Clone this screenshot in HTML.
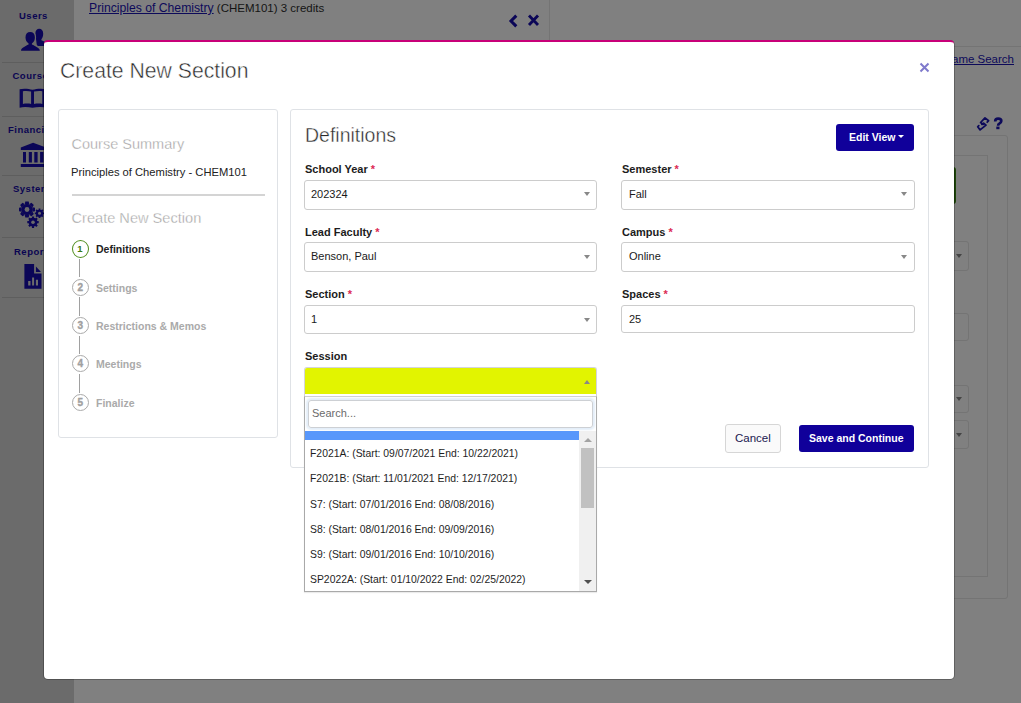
<!DOCTYPE html>
<html><head><meta charset="utf-8">
<style>
*{box-sizing:border-box;margin:0;padding:0}
html,body{width:1021px;height:703px;overflow:hidden;background:#808080;font-family:"Liberation Sans",sans-serif;position:relative}
div,span,svg{position:absolute}
span.n{position:static}
.t{white-space:pre;line-height:1}
#side{left:0;top:0;width:74px;height:703px;background:#6b6b6b}
.sl{font-size:9.5px;font-weight:bold;color:#0a0552;letter-spacing:0.5px;line-height:1;white-space:pre}
.hr{left:2px;width:72px;height:1px;background:#5e5e5e}
.card{border:1px solid #dfe2e6;border-radius:3px;background:#fff}
.lbl{font-size:11px;font-weight:bold;color:#1c1c1c;line-height:1;white-space:pre}
.ast{color:#dc2a55}
.sel{height:30px;border:1px solid #cccccc;border-radius:3px;background:#fff}
.val{font-size:11px;color:#1a1a1a;line-height:1;white-space:pre}
.arr{width:0;height:0;border-left:3px solid transparent;border-right:3px solid transparent;border-top:4px solid #888}
.circ{left:72px;width:17px;height:17px;border:1.3px solid #aaa;border-radius:50%}
.cn{left:-0.3px;width:15px;top:3.2px;text-align:center;font-size:10px;font-weight:bold;color:#a0a0a0;line-height:1;-webkit-text-stroke-width:0.35px}
.stp{left:96px;font-size:10.5px;font-weight:bold;color:#aaa;line-height:1;white-space:pre}
.vl{left:79px;width:1px;background:#a0a0a0}
.opt{left:310px;font-size:10.4px;color:#1e1e1e;line-height:1;white-space:pre}
</style></head><body>
<div id="side">
  <div class="sl" style="left:19px;top:11px">Users</div>
  <svg style="left:18px;top:25px" width="30" height="30" viewBox="0 0 30 30">
    <path fill="#0b0657" d="M17.3 8.8C17.3 5.6 19.2 3.8 21.2 3.8C23.4 3.8 25.2 5.6 25.2 8.8C25.2 11.3 24.4 13 23.4 14.2L23.4 15.3C25 16 26.5 16.8 28 17.5L28 21L20 21C19 20.2 18.6 19.4 18.6 18.4z"/>
    <path fill="#0b0657" stroke="#6b6b6b" stroke-width="2.4" paint-order="stroke" d="M3.1 25.8C2.9 24.6 3.4 23.6 4.8 22.7L9.3 19.9L10.6 19.4L10.6 18.5C8.6 17.2 7.5 15.2 7.5 12.3C7.5 8.8 9.4 7 12.2 7C15 7 16.9 8.8 16.9 12.3C16.9 15.2 15.9 17.2 13.9 18.5L13.9 19.4L15.2 19.9L19.8 22.7C21.3 23.6 21.9 24.6 21.8 25.8z"/>
  </svg>
  <div class="hr" style="top:62px"></div>
  <div class="sl" style="left:12.5px;top:71px">Courses</div>
  <svg style="left:15px;top:85px" width="32" height="27" viewBox="0 0 32 27">
    <path fill="#0b0657" fill-rule="evenodd" d="M4.6 4.2C8 3.3 13.5 3.5 17.5 4.8C21.5 3.5 27 3.3 32 4.2L32 22.7C27 21.8 21.5 22 17.5 22.8C13.5 22 8 21.8 4.6 22.7Z M7.9 6.3C10.5 5.9 14 6 16.1 6.6L16.1 19C14 18.5 10.5 18.4 7.9 19Z M19 6.6C21.5 6 25 5.9 27.3 6.3L27.3 19C25 18.4 21.5 18.5 19 19Z"/>
  </svg>
  <div class="hr" style="top:116px"></div>
  <div class="sl" style="left:8px;top:125px">Financial</div>
  <svg style="left:15px;top:138px" width="32" height="32" viewBox="0 0 32 32">
    <path fill="#0b0657" d="M18.1 4.8L31 9.5V12.1H5.8V9.5z M8 14h3v10.4H8z M13.8 14h3.1v10.4h-3.1z M19.3 14h3.3v10.4h-3.3z M25.1 14h3.4v10.4h-3.4z M5.8 26.1H32V29H5.8z"/>
  </svg>
  <div class="hr" style="top:175px"></div>
  <div class="sl" style="left:13px;top:184px">System</div>
  <svg style="left:18px;top:200px" width="30" height="30" viewBox="0 0 30 30">
    <g fill="#0b0657">
      <circle cx="9" cy="9.5" r="5.8"/>
      <path d="M7.3 1.5h3.4l0.5 2.5h-4.4z M7.3 17.5h3.4l0.5-2.5h-4.4z M1 7.8v3.4l2.5 0.5v-4.4z M17 7.8v3.4l-2.5 0.5v-4.4z"/>
      <path transform="rotate(45 9 9.5)" d="M7.3 1.5h3.4l0.5 2.5h-4.4z M7.3 17.5h3.4l0.5-2.5h-4.4z M1 7.8v3.4l2.5 0.5v-4.4z M17 7.8v3.4l-2.5 0.5v-4.4z"/>
      <circle cx="21.5" cy="13.3" r="3.6"/>
      <path d="M20.6 8.6h1.8v2h-1.8z M20.6 16h1.8v2h-1.8z M16.8 12.4v1.8h2v-1.8z M24.2 12.4v1.8h2v-1.8z"/>
      <path transform="rotate(45 21.5 13.3)" d="M20.6 8.6h1.8v2h-1.8z M20.6 16h1.8v2h-1.8z M16.8 12.4v1.8h2v-1.8z M24.2 12.4v1.8h2v-1.8z"/>
      <circle cx="15" cy="22.2" r="4.4"/>
      <path d="M13.9 16.5h2.2v2.2h-2.2z M13.9 25.7h2.2v2.2h-2.2z M9.3 21.1v2.2h2.2v-2.2z M18.5 21.1v2.2h2.2v-2.2z"/>
      <path transform="rotate(45 15 22.2)" d="M13.9 16.5h2.2v2.2h-2.2z M13.9 25.7h2.2v2.2h-2.2z M9.3 21.1v2.2h2.2v-2.2z M18.5 21.1v2.2h2.2v-2.2z"/>
    </g>
    <g fill="#6b6b6b">
      <circle cx="9" cy="9.5" r="2.4"/>
      <circle cx="21.5" cy="13.3" r="1.5"/>
      <circle cx="15" cy="22.2" r="1.8"/>
    </g>
  </svg>
  <div class="hr" style="top:237px"></div>
  <div class="sl" style="left:14px;top:247px">Reports</div>
  <svg style="left:18px;top:258px" width="30" height="36" viewBox="0 0 30 36">
    <path fill="#0b0657" d="M6.4 6H16.1V15.6H23.5V30.8H6.4z M17.9 8.4L23 14.1H17.9z"/>
    <path fill="#6b6b6b" d="M10.2 23h2.3v4.6h-2.3z M14.1 19.5h2v8.1h-2z M17.9 21.8h2.1v5.8h-2.1z"/>
  </svg>
  <div class="hr" style="top:297px"></div>
</div>

<!-- background page -->
<div class="t" style="left:89px;top:2px;font-size:11.5px;color:#141414"><span class="n" style="color:#0d0a5a;text-decoration:underline;font-size:12.2px">Principles of Chemistry</span> (CHEM101) 3 credits</div>
<svg style="left:508px;top:14px" width="34" height="14" viewBox="0 0 34 14">
  <path d="M8.3 1.6L3 7L8.3 12.4" stroke="#0b0657" stroke-width="3" fill="none"/>
  <path d="M21 1.5L30 11 M30 1.5L21 11" stroke="#0b0657" stroke-width="2.8" fill="none"/>
</svg>
<div style="left:549px;top:0;width:1px;height:40px;background:#747474"></div>
<div style="left:954px;top:46px;width:67px;height:1px;background:#747474"></div>
<div class="t" style="right:7px;top:54px;font-size:11.5px;color:#0d0a5a;text-decoration:underline">Name Search</div>
<svg style="left:972px;top:112px" width="36" height="24" viewBox="0 0 36 24">
  <g fill="none" stroke="#0d0a5a" stroke-width="1.8" stroke-linejoin="round" stroke-linecap="round">
    <path d="M15.2 10.2L16.6 8.7L13 5.9L8.6 10.5L11.2 12.4"/>
    <path d="M9.9 12.4L11.6 11.1L14 13.1L8.1 17.9L5.7 14.8L6.8 13.7"/>
  </g>
  <path fill="none" stroke="#0d0a5a" stroke-width="2.7" d="M23.2 9.4C23.2 7.3 24.6 6.7 26.2 6.7C28.1 6.7 29.3 7.6 29.3 9C29.3 10.4 28.3 11 27.3 11.6C26.4 12.1 26.1 12.7 26.1 13.8"/>
  <path fill="#0d0a5a" d="M24.3 14.6h3.2v2.6h-3.2z"/>
</svg>
<div style="left:940px;top:135px;width:68px;height:464px;border:1px solid #747474;border-radius:3px"></div>
<div style="left:940px;top:155px;width:48px;height:422px;border:1px solid #747474"></div>
<div style="left:949px;top:167px;width:6.5px;height:37px;background:#1d4508;border-radius:3px"></div>
<div style="left:940px;top:241px;width:29px;height:30px;border:1px solid #747474;border-radius:3px"><div class="arr" style="left:15px;top:12px;border-top-color:#444"></div></div>
<div style="left:940px;top:313px;width:29px;height:28px;border:1px solid #747474;border-radius:3px"></div>
<div style="left:940px;top:385px;width:29px;height:28px;border:1px solid #747474;border-radius:3px"><div class="arr" style="left:15px;top:11px;border-top-color:#444"></div></div>
<div style="left:940px;top:420px;width:29px;height:29px;border:1px solid #747474;border-radius:3px"><div class="arr" style="left:15px;top:12px;border-top-color:#444"></div></div>

<!-- modal -->
<div style="left:43px;top:40px;width:912px;height:640px;background:rgba(0,0,0,.25);border-radius:5px"></div>
<div style="left:44px;top:40px;width:910px;height:639px;background:#fff;border-top:2px solid #c80078;border-radius:4px"></div>
<div class="t" style="left:60px;top:60px;font-size:21.2px;color:#2a2a2a;-webkit-text-stroke:0.45px #fff">Create New Section</div>
<svg style="left:919px;top:62px" width="11" height="11" viewBox="0 0 11 11"><path d="M1.5 1.5L9.5 9.5 M9.5 1.5L1.5 9.5" stroke="#7f7acc" stroke-width="2"/></svg>

<div class="card" style="left:58px;top:109px;width:220px;height:329px"></div>
<div class="t" style="left:71.5px;top:137px;font-size:14.5px;color:#9c9c9c;-webkit-text-stroke:0.35px #fff">Course Summary</div>
<div class="t" style="left:71px;top:167px;font-size:11.2px;color:#222">Principles of Chemistry - CHEM101</div>
<div style="left:72px;top:194px;width:193px;height:2px;background:#d4d4d4"></div>
<div class="t" style="left:71.5px;top:211px;font-size:14.6px;color:#9c9c9c;-webkit-text-stroke:0.35px #fff">Create New Section</div>

<div class="circ" style="top:240px;height:18px;border:1.7px solid #4f8d1c"><div class="cn" style="color:#3a7a12;left:-0.7px;top:3.3px;font-size:9.5px;-webkit-text-stroke-width:0">1</div></div>
<div class="stp" style="top:244px;color:#222">Definitions</div>
<div class="vl" style="top:259px;height:18px"></div>
<div class="circ" style="top:279px"><div class="cn">2</div></div>
<div class="stp" style="top:283px">Settings</div>
<div class="vl" style="top:297px;height:19px"></div>
<div class="circ" style="top:317px"><div class="cn">3</div></div>
<div class="stp" style="top:321px">Restrictions &amp; Memos</div>
<div class="vl" style="top:336px;height:18px"></div>
<div class="circ" style="top:355px"><div class="cn">4</div></div>
<div class="stp" style="top:359px">Meetings</div>
<div class="vl" style="top:374px;height:19px"></div>
<div class="circ" style="top:394px"><div class="cn">5</div></div>
<div class="stp" style="top:398px">Finalize</div>

<div class="card" style="left:290px;top:109px;width:639px;height:359px"></div>
<div class="t" style="left:305px;top:125.5px;font-size:19.5px;color:#2a2a2a;-webkit-text-stroke:0.4px #fff">Definitions</div>
<div style="left:836px;top:124px;width:78px;height:27px;background:#10009a;border-radius:3px"></div>
<div class="t" style="left:849px;top:132px;font-size:10.5px;font-weight:bold;color:#fff">Edit View</div>
<div class="arr" style="left:898px;top:135px;border-top-color:#fff;border-left-width:3px;border-right-width:3px;border-top-width:3px"></div>

<div class="lbl" style="left:305px;top:164px">School Year <span class="n ast">*</span></div>
<div class="sel" style="left:304px;top:180px;width:293px"><div class="arr" style="left:279px;top:11px"></div></div>
<div class="val" style="left:311px;top:189px">202324</div>
<div class="lbl" style="left:622px;top:164px">Semester <span class="n ast">*</span></div>
<div class="sel" style="left:621px;top:180px;width:294px"><div class="arr" style="left:279px;top:11px"></div></div>
<div class="val" style="left:629px;top:189px">Fall</div>

<div class="lbl" style="left:305px;top:227px">Lead Faculty <span class="n ast">*</span></div>
<div class="sel" style="left:304px;top:242px;width:293px"><div class="arr" style="left:279px;top:12px"></div></div>
<div class="val" style="left:311px;top:251px">Benson, Paul</div>
<div class="lbl" style="left:622px;top:227px">Campus <span class="n ast">*</span></div>
<div class="sel" style="left:621px;top:242px;width:294px"><div class="arr" style="left:279px;top:12px"></div></div>
<div class="val" style="left:629px;top:251px">Online</div>

<div class="lbl" style="left:305px;top:289px">Section <span class="n ast">*</span></div>
<div class="sel" style="left:304px;top:305px;width:293px;height:29px"><div class="arr" style="left:279px;top:12px"></div></div>
<div class="val" style="left:311px;top:314px">1</div>
<div class="lbl" style="left:622px;top:289px">Spaces <span class="n ast">*</span></div>
<div class="sel" style="left:621px;top:305px;width:294px;height:28px"></div>
<div class="val" style="left:629px;top:314px">25</div>

<div class="lbl" style="left:305px;top:351px">Session</div>
<div style="left:304px;top:367px;width:293px;height:29px;background:#fff;border:1px solid #d4d4dc;border-bottom:none;border-radius:3px 3px 0 0"><div style="left:0;top:0;width:291px;height:26px;background:#e2f400;border-radius:2px 2px 0 0"></div><div class="arr" style="left:279px;top:12px;border-top:none;border-bottom:4px solid #888"></div></div>
<div style="left:304px;top:396px;width:293px;height:196px;border:1px solid #a9a9a9;border-top:1px solid #cfcfcf;background:#fff;box-shadow:0 1px 1px rgba(0,0,0,.08)"></div>
<div style="left:308px;top:400px;width:285px;height:28px;border:1px solid #cdd0d4;border-radius:3px;box-shadow:0 0 2px 2px #e3eef9"></div>
<div class="t" style="left:312px;top:408px;font-size:11px;color:#6b6b6b">Search...</div>
<div style="left:305px;top:431px;width:274px;height:9px;background:#5897fb"></div>
<div style="left:579px;top:431px;width:17px;height:160px;background:#f0f0f0"></div>
<div class="arr" style="left:584px;top:438px;border-top:none;border-bottom:4px solid #a3a3a3;border-left-width:4px;border-right-width:4px"></div>
<div style="left:581px;top:448px;width:13px;height:60px;background:#c1c1c1"></div>
<div class="arr" style="left:584px;top:580px;border-top:4px solid #505050;border-left-width:4px;border-right-width:4px"></div>
<div class="opt" style="top:449px">F2021A: (Start: 09/07/2021 End: 10/22/2021)</div>
<div class="opt" style="top:474px">F2021B: (Start: 11/01/2021 End: 12/17/2021)</div>
<div class="opt" style="top:500px">S7: (Start: 07/01/2016 End: 08/08/2016)</div>
<div class="opt" style="top:525px">S8: (Start: 08/01/2016 End: 09/09/2016)</div>
<div class="opt" style="top:550px">S9: (Start: 09/01/2016 End: 10/10/2016)</div>
<div class="opt" style="top:575px">SP2022A: (Start: 01/10/2022 End: 02/25/2022)</div>

<div style="left:725px;top:424px;width:56px;height:29px;border:1px solid #d6d6d6;border-radius:3px;background:#fafafa"></div>
<div class="t" style="left:735px;top:433px;font-size:11.5px;color:#1a1850">Cancel</div>
<div style="left:799px;top:425px;width:115px;height:27px;background:#10009a;border-radius:3px"></div>
<div class="t" style="left:809px;top:433px;font-size:10.5px;font-weight:bold;color:#fff">Save and Continue</div>
</body></html>
